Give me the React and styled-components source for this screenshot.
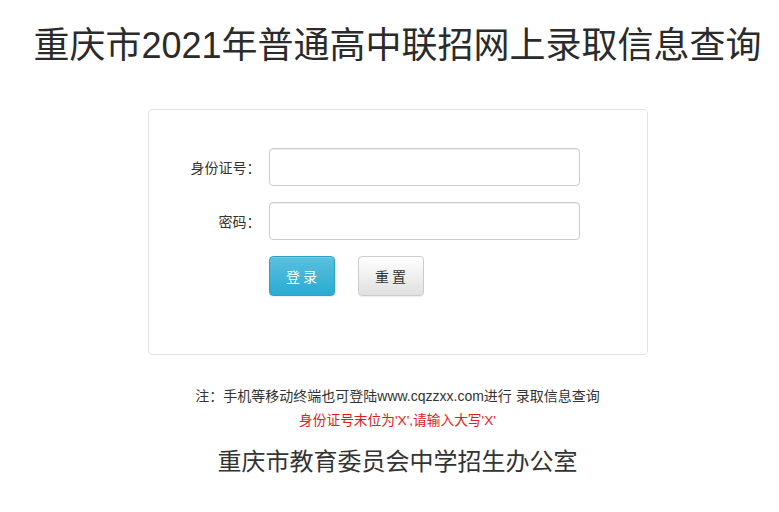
import React from 'react';
import styled, { createGlobalStyle } from 'styled-components';

const GlobalStyle = createGlobalStyle`
  html, body {
    margin: 0;
    padding: 0;
    background: #fff;
    overflow-x: hidden;
  }
  body {
    font-family: "Liberation Sans", "Noto Sans CJK SC", sans-serif;
    color: #333;
  }
`;

const Page = styled.div`
  width: 795px;
  margin: 0 auto;
  display: flex;
  flex-direction: column;
  align-items: center;
`;

const Title = styled.h1`
  margin: 23px 0 0;
  font-size: 36px;
  line-height: 46px;
  font-weight: normal;
  color: #2b2b2b;
  white-space: nowrap;
`;

const Card = styled.form`
  margin-top: 40px;
  width: 500px;
  box-sizing: border-box;
  border: 1px solid #e3e3e3;
  border-radius: 4px;
  padding: 38px 0 58px;
  display: flex;
  flex-direction: column;
  gap: 16px;
`;

const Row = styled.div`
  display: flex;
  align-items: center;
  gap: 8px;
`;

const Label = styled.label`
  width: 112px;
  text-align: right;
  font-size: 14px;
  color: #333;
`;

const Input = styled.input`
  width: 311px;
  height: 38px;
  box-sizing: border-box;
  border: 1px solid #ccc;
  border-radius: 4px;
  box-shadow: inset 0 1px 1px rgba(0, 0, 0, 0.075);
  outline: none;
  padding: 6px 12px;
  font-size: 14px;
`;

const Buttons = styled.div`
  display: flex;
  gap: 23px;
  padding-left: 120px;
`;

const Button = styled.button`
  width: 66px;
  height: 40px;
  box-sizing: border-box;
  border-radius: 4px;
  font-family: inherit;
  font-size: 14px;
  letter-spacing: 3px;
  padding: 0 0 0 3px;
  cursor: pointer;
  border: 1px solid ${({ $primary }) => ($primary ? '#28a4c9' : '#ccc')};
  color: ${({ $primary }) => ($primary ? '#fff' : '#333')};
  background: ${({ $primary }) =>
    $primary
      ? 'linear-gradient(to bottom, #5bc0de 0%, #2aabd2 100%)'
      : 'linear-gradient(to bottom, #fff 0%, #e0e0e0 100%)'};
  box-shadow: inset 0 1px 0 rgba(255, 255, 255, 0.15), 0 1px 1px rgba(0, 0, 0, 0.075);
`;

const Note = styled.p`
  margin: 31px 0 0;
  font-size: 14px;
  line-height: 20px;
  color: #333;
`;

const Warning = styled.p`
  margin: 5px 0 0;
  font-size: 13.7px;
  line-height: 20px;
  color: #e31b1b;
`;

const Footer = styled.p`
  margin: 16px 0 0;
  font-size: 24px;
  line-height: 30px;
  color: #333;
`;

const App = () => (
  <Page>
    <GlobalStyle />
    <Title>重庆市2021年普通高中联招网上录取信息查询</Title>
    <Card onSubmit={(e) => e.preventDefault()}>
      <Row>
        <Label>身份证号：</Label>
        <Input type="text" />
      </Row>
      <Row>
        <Label>密码：</Label>
        <Input type="password" />
      </Row>
      <Buttons>
        <Button $primary type="submit">登录</Button>
        <Button type="reset">重置</Button>
      </Buttons>
    </Card>
    <Note>注：手机等移动终端也可登陆www.cqzzxx.com进行 录取信息查询</Note>
    <Warning>身份证号末位为'X',请输入大写'X'</Warning>
    <Footer>重庆市教育委员会中学招生办公室</Footer>
  </Page>
);

export default App;
